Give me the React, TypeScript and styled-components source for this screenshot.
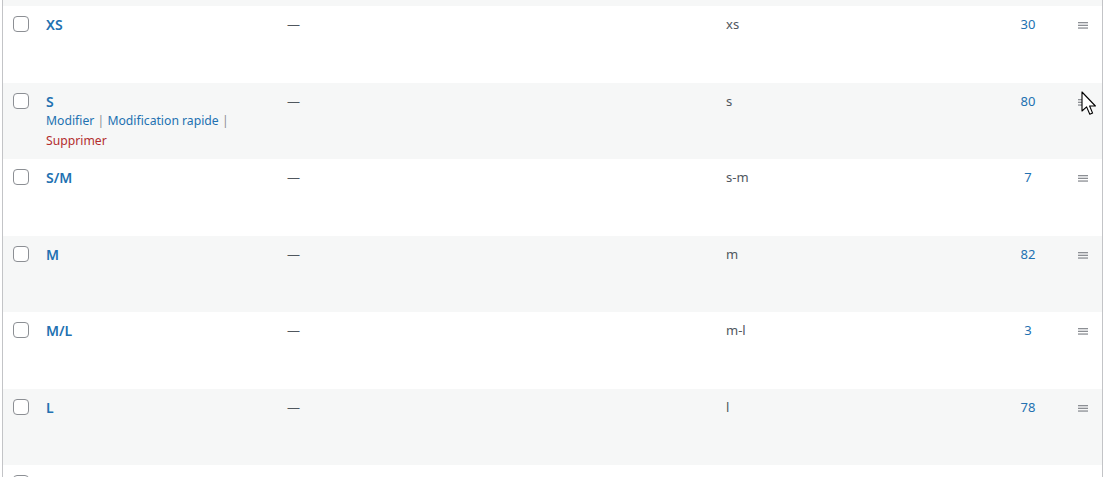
import React from "react";
import styled, { createGlobalStyle } from "styled-components";

interface Term {
  id: string;
  name: string;
  slug: string;
  count: number;
  hovered?: boolean;
}

const terms: Term[] = [
  { id: "xs", name: "XS", slug: "xs", count: 30 },
  { id: "s", name: "S", slug: "s", count: 80, hovered: true },
  { id: "sm", name: "S/M", slug: "s-m", count: 7 },
  { id: "m", name: "M", slug: "m", count: 82 },
  { id: "ml", name: "M/L", slug: "m-l", count: 3 },
  { id: "l", name: "L", slug: "l", count: 78 },
];

const GlobalStyle = createGlobalStyle`
  html, body {
    margin: 0;
    padding: 0;
    background: #fff;
  }
  body {
    font-family: "Noto Sans", "Open Sans", Arial, sans-serif;
    font-size: 13px;
    color: #3c434a;
    overflow: hidden;
  }
`;

const Viewport = styled.div`
  position: relative;
  height: 477px;
  overflow: hidden;
  padding-left: 2px;
`;

const Table = styled.div`
  width: 1099px;
  border-left: 1px solid #c3c4c7;
  border-right: 1px solid #c3c4c7;
`;

const Row = styled.div<{ $alt: boolean }>`
  display: grid;
  grid-template-columns: 33px 241px 439px 264px 96px 26px;
  height: 76.5px;
  background: ${(p) => (p.$alt ? "#f6f7f7" : "#fff")};
`;

const StubRow = styled.div`
  height: 6px;
  background: #f6f7f7;
`;

const Cell = styled.div<{ $center?: boolean }>`
  padding: 9px 10px 8px;
  line-height: 19.5px;
  text-align: ${(p) => (p.$center ? "center" : "left")};
  overflow: hidden;
`;

const CheckCell = styled.div`
  padding: 10px 0 0 10px;
`;

const Checkbox = styled.span`
  display: block;
  width: 16px;
  height: 16px;
  box-sizing: border-box;
  border: 1px solid #8c8f94;
  border-radius: 4px;
  background: #fff;
`;

const NameLink = styled.a`
  display: block;
  font-size: 14px;
  font-weight: 600;
  color: #2271b1;
  text-decoration: none;
`;

const Actions = styled.div`
  color: #2271b1;
  font-size: 12.2px;
  line-height: 20px;
`;

const Action = styled.span<{ $danger?: boolean }>`
  white-space: nowrap;
  color: ${(p) => (p.$danger ? "#b32d2e" : "#2271b1")};
`;

const Sep = styled.span`
  color: #8c8f94;
`;

const Muted = styled.span`
  color: #50575e;
`;

const CountLink = styled.a`
  color: #2271b1;
  text-decoration: none;
`;

const HandleCell = styled.div`
  padding: 16px 0 0 2px;

  svg {
    display: block;
  }
`;

const Cursor = styled.svg`
  position: absolute;
  left: 1081px;
  top: 91px;
  pointer-events: none;
`;

function Handle() {
  return (
    <svg width="10" height="7" viewBox="0 0 10 7">
      <rect x="0" y="0" width="10" height="1.3" fill="#8c8f94" />
      <rect x="0" y="2.7" width="10" height="1.3" fill="#8c8f94" />
      <rect x="0" y="5.4" width="10" height="1.3" fill="#8c8f94" />
    </svg>
  );
}

function TermRow({ term, alt }: { term: Term; alt: boolean }) {
  return (
    <Row $alt={alt}>
      <CheckCell>
        <Checkbox />
      </CheckCell>
      <Cell>
        <NameLink>{term.name}</NameLink>
        {term.hovered && (
          <Actions>
            <Action>Modifier</Action> <Sep>|</Sep>{" "}
            <Action>Modification rapide</Action> <Sep>|</Sep>{" "}
            <Action $danger>Supprimer</Action>
          </Actions>
        )}
      </Cell>
      <Cell>
        <Muted>—</Muted>
      </Cell>
      <Cell>
        <Muted>{term.slug}</Muted>
      </Cell>
      <Cell $center>
        <CountLink>{term.count}</CountLink>
      </Cell>
      <HandleCell>
        <Handle />
      </HandleCell>
    </Row>
  );
}

export default function App() {
  return (
    <>
      <GlobalStyle />
      <Viewport>
        <Table>
          <StubRow />
          {terms.map((t, i) => (
            <TermRow key={t.id} term={t} alt={i % 2 === 1} />
          ))}
          {/* next row, only its checkbox edge is in view */}
          <Row $alt={false}>
            <CheckCell>
              <Checkbox />
            </CheckCell>
          </Row>
        </Table>
        <Cursor width="16" height="26" viewBox="0 0 16 26">
          <path
            d="M1 1 L1 20 L5.6 15.9 L8.8 23.3 L11.6 22.1 L8.6 15 L14.4 15 Z"
            fill="#fff"
            stroke="#000"
            strokeWidth="1.1"
            strokeLinejoin="round"
          />
        </Cursor>
      </Viewport>
    </>
  );
}
